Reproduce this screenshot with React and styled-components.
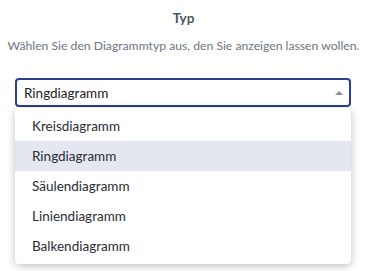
import React from "react";
import styled, { createGlobalStyle } from "styled-components";

const GlobalStyle = createGlobalStyle`
  body {
    margin: 0;
    background: #ffffff;
    font-family: Lato, "Noto Sans", sans-serif;
  }
`;

const Page = styled.div`
  width: 367px;
  height: 271px;
  box-sizing: border-box;
  padding-top: 8px;
  display: flex;
  flex-direction: column;
  align-items: center;
`;

const Title = styled.div`
  font-size: 13.5px;
  font-weight: 700;
  line-height: 20px;
  color: #505560;
`;

const Subtitle = styled.div`
  margin-top: 8px;
  font-size: 12.2px;
  line-height: 20px;
  color: #6f7480;
  white-space: nowrap;
`;

const SelectWrap = styled.div`
  position: relative;
  margin-top: 22px;
  width: 336px;
  align-self: flex-start;
  margin-left: 15px;
`;

const SelectBox = styled.div`
  height: 29px;
  box-sizing: border-box;
  border: 2px solid #2c3e8e;
  border-radius: 4px;
  display: flex;
  align-items: center;
  justify-content: space-between;
  padding: 0 6px 0 7px;
  font-size: 13.5px;
  color: #222;
`;

const Caret = styled.span`
  width: 0;
  height: 0;
  border-left: 4px solid transparent;
  border-right: 4px solid transparent;
  border-bottom: 4px solid #8a8e96;
`;

const Menu = styled.ul`
  position: absolute;
  left: 0;
  right: 0;
  top: 30px;
  margin: 0;
  padding: 3px 0;
  list-style: none;
  background: #fff;
  border-radius: 4px;
  box-shadow: 0 2px 8px rgba(0, 0, 0, 0.25);
`;

const Item = styled.li`
  height: 30px;
  display: flex;
  align-items: center;
  padding-left: 17px;
  font-size: 13.5px;
  color: #2a2d33;
  background: ${(p) => (p.$active ? "#e5e7f0" : "transparent")};
`;

const options = [
  "Kreisdiagramm",
  "Ringdiagramm",
  "Säulendiagramm",
  "Liniendiagramm",
  "Balkendiagramm",
];

export default function App() {
  const selected = "Ringdiagramm";
  return (
    <>
      <GlobalStyle />
      <Page>
        <Title>Typ</Title>
        <Subtitle>Wählen Sie den Diagrammtyp aus, den Sie anzeigen lassen wollen.</Subtitle>
        <SelectWrap>
          <SelectBox>
            {selected}
            <Caret />
          </SelectBox>
          <Menu>
            {options.map((o) => (
              <Item key={o} $active={o === selected}>
                {o}
              </Item>
            ))}
          </Menu>
        </SelectWrap>
      </Page>
    </>
  );
}
